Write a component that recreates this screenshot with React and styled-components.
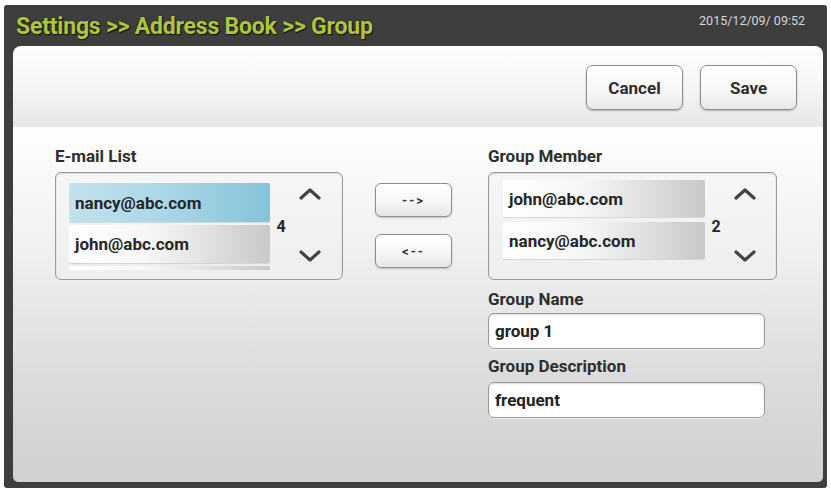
import React from "react";
import styled, { createGlobalStyle } from "styled-components";

const Global = createGlobalStyle`
  html, body { margin: 0; padding: 0; background: #ffffff; }
  body { font-family: Roboto, "Liberation Sans", Arial, sans-serif; }
  * { box-sizing: border-box; }
`;

const Frame = styled.div`
  width: 823px;
  height: 483px;
  margin: 5px 0 0 4px;
  padding: 0 4px 6px 9px;
  background: #3e3e3e;
  border-radius: 3px;
  display: flex;
  flex-direction: column;
`;

const Header = styled.div`
  height: 41px;
  flex: none;
  display: flex;
  align-items: center;
  justify-content: space-between;
  padding: 0 18px 0 3px;
`;

const Title = styled.div`
  font-family: Roboto, "Liberation Sans", sans-serif;
  font-weight: 700;
  font-size: 23px;
  letter-spacing: -0.2px;
  color: #adc53c;
  text-shadow: 1px 1px 1px #111, 0 0 2px #2a2a10;
  line-height: 28px;
  margin-top: 2px;
`;

const Clock = styled.div`
  align-self: flex-start;
  margin-top: 8px;
  font-size: 12.5px;
  line-height: 16px;
  color: #d6d6d6;
`;

const Panel = styled.div`
  flex: 1;
  display: flex;
  flex-direction: column;
  border-radius: 8px 8px 5px 5px;
  overflow: hidden;
`;

const Toolbar = styled.div`
  height: 81px;
  flex: none;
  display: flex;
  justify-content: flex-end;
  align-items: flex-start;
  gap: 17px;
  padding: 19px 26px 0 0;
  background: linear-gradient(to bottom, #fdfdfd 0%, #f6f6f6 50%, #e6e6e6 100%);
`;

const Button = styled.div`
  width: 97px;
  height: 45px;
  display: flex;
  align-items: center;
  justify-content: center;
  border: 1.5px solid #8e8e8e;
  border-radius: 7px;
  background: linear-gradient(to bottom, #ffffff 0%, #f7f7f7 55%, #e8e8e8 100%);
  box-shadow: 0 1px 2px rgba(0, 0, 0, 0.25), inset 0 1px 0 #fff;
  font-weight: 700;
  font-size: 17px;
  color: #2d2d2d;
`;

const Main = styled.div`
  flex: 1;
  display: flex;
  align-items: flex-start;
  padding: 19px 0 0 42px;
  background: linear-gradient(to bottom, #fefefe 0%, #f0f0f0 35%, #dcdcdc 70%, #d0d0d0 100%);
`;

const Column = styled.div`
  width: ${(p) => p.$w}px;
  margin-left: ${(p) => p.$ml || 0}px;
  display: flex;
  flex-direction: column;
`;

const Label = styled.div`
  font-weight: 700;
  font-size: 17px;
  line-height: 20px;
  color: #2e2e2e;
  margin-top: ${(p) => p.$mt || 0}px;
`;

const ListBox = styled.div`
  margin-top: 6px;
  height: 108px;
  display: flex;
  border: 1.5px solid #9a9a9a;
  border-radius: 6px;
  background: linear-gradient(to bottom, #f6f6f6 0%, #eeeeee 100%);
  box-shadow: inset 0 1px 2px rgba(0, 0, 0, 0.12);
  padding-left: ${(p) => p.$pl}px;
`;

const ItemList = styled.div`
  width: ${(p) => p.$w}px;
  margin-top: ${(p) => p.$top}px;
  height: ${(p) => p.$h}px;
  display: flex;
  flex-direction: column;
  gap: ${(p) => p.$gap}px;
  overflow: hidden;
  flex: none;
`;

const Item = styled.div`
  flex: none;
  height: ${(p) => p.$h}px;
  display: flex;
  align-items: center;
  padding-left: 6px;
  font-weight: 700;
  font-size: 17px;
  color: #262626;
  border-radius: 2px;
  background: ${(p) =>
    p.$selected
      ? "linear-gradient(to right, #c2e2ec 0%, #a9d6e6 50%, #86c2d8 100%)"
      : "linear-gradient(to right, #ffffff 0%, #f6f6f6 40%, #d8d8d8 80%, #c8c8c8 100%)"};
  box-shadow: 0 1px 1px rgba(0, 0, 0, 0.12);
`;

const Count = styled.div`
  width: 22px;
  flex: none;
  display: flex;
  align-items: center;
  justify-content: center;
  font-weight: 700;
  font-size: 16px;
  color: #262626;
`;

const ScrollCol = styled.div`
  width: 36px;
  flex: none;
  display: flex;
  flex-direction: column;
  justify-content: space-between;
  align-items: center;
  padding: 15px 0 17px;
`;

const TransferCol = styled.div`
  margin-left: 32px;
  margin-top: 37px;
  display: flex;
  flex-direction: column;
  gap: 17px;
`;

const SmallButton = styled.div`
  width: 77px;
  height: 34px;
  display: flex;
  align-items: center;
  justify-content: center;
  border: 1.5px solid #8e8e8e;
  border-radius: 6px;
  background: linear-gradient(to bottom, #ffffff 0%, #f6f6f6 55%, #e6e6e6 100%);
  box-shadow: 0 1px 2px rgba(0, 0, 0, 0.2);
  font-weight: 700;
  font-size: 13px;
  letter-spacing: 2px;
  color: #333;
`;

const Field = styled.div`
  margin-top: ${(p) => p.$mt || 4}px;
  width: 277px;
  height: 36px;
  display: flex;
  align-items: center;
  padding-left: 6px;
  border: 1.5px solid #9a9a9a;
  border-radius: 6px;
  background: #ffffff;
  box-shadow: inset 0 1px 2px rgba(0, 0, 0, 0.15), 0 1px 0 rgba(255,255,255,0.6);
  font-weight: 700;
  font-size: 17px;
  color: #222;
`;

const Chevron = ({ down }) => (
  <svg width="24" height="12" viewBox="0 0 24 12">
    <path
      d={down ? "M3 2 L12 10 L21 2" : "M3 10 L12 2 L21 10"}
      fill="none"
      stroke="#444"
      strokeWidth="3.2"
      strokeLinecap="round"
      strokeLinejoin="round"
    />
  </svg>
);

export default function App() {
  return (
    <>
      <Global />
      <Frame>
        <Header>
          <Title>Settings &gt;&gt; Address Book &gt;&gt; Group</Title>
          <Clock>2015/12/09/ 09:52</Clock>
        </Header>
        <Panel>
          <Toolbar>
            <Button>Cancel</Button>
            <Button>Save</Button>
          </Toolbar>
          <Main>
            <Column $w={288}>
              <Label>E-mail List</Label>
              <ListBox $pl={13}>
                <ItemList $w={201} $top={10} $h={87} $gap={3}>
                  <Item $h={39} $selected>nancy@abc.com</Item>
                  <Item $h={38}>john@abc.com</Item>
                  <Item $h={38} aria-hidden="true" />
                </ItemList>
                <Count>4</Count>
                <ScrollCol>
                  <Chevron />
                  <Chevron down />
                </ScrollCol>
              </ListBox>
            </Column>
            <TransferCol>
              <SmallButton>--&gt;</SmallButton>
              <SmallButton>&lt;--</SmallButton>
            </TransferCol>
            <Column $w={289} $ml={36}>
              <Label>Group Member</Label>
              <ListBox $pl={14}>
                <ItemList $w={202} $top={7} $h={80} $gap={5}>
                  <Item $h={37}>john@abc.com</Item>
                  <Item $h={37}>nancy@abc.com</Item>
                </ItemList>
                <Count>2</Count>
                <ScrollCol>
                  <Chevron />
                  <Chevron down />
                </ScrollCol>
              </ListBox>
              <Label $mt={9}>Group Name</Label>
              <Field>group 1</Field>
              <Label $mt={7}>Group Description</Label>
              <Field $mt={6}>frequent</Field>
            </Column>
          </Main>
        </Panel>
      </Frame>
    </>
  );
}
